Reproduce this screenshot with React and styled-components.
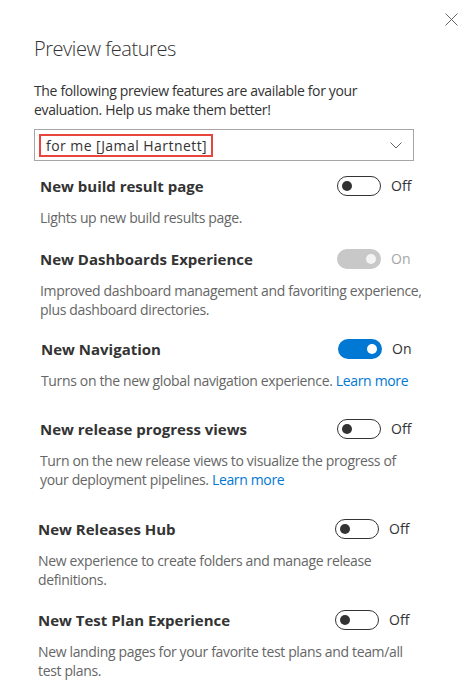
import React from "react";
import styled, { createGlobalStyle } from "styled-components";

const Global = createGlobalStyle`
  html, body { margin: 0; padding: 0; background: #ffffff; }
  body { font-family: "Open Sans", "Noto Sans", sans-serif; color: #333333; }
  * { box-sizing: border-box; }
`;

const Panel = styled.div`
  width: 469px;
  height: 698px;
  background: #ffffff;
  display: flex;
  flex-direction: column;
`;

const TopBar = styled.div`
  display: flex;
  justify-content: flex-end;
  padding: 13px 11px 0 0;
  height: 27px;
`;

const CloseButton = styled.button`
  width: 13px;
  height: 13px;
  padding: 0;
  border: none;
  background: transparent;
  display: flex;
  cursor: pointer;
`;

const Body = styled.div`
  padding: 8px 0 0 34px;
  display: flex;
  flex-direction: column;
`;

const Title = styled.h1`
  margin: 0;
  font-size: 20px;
  line-height: 28px;
  font-weight: 300;
  letter-spacing: -0.45px;
  color: #333333;
`;

const Intro = styled.p`
  margin: 18px 0 0;
  font-size: 14px;
  line-height: 19px;
  letter-spacing: -0.35px;
  color: #333333;
  width: 360px;
`;

const Dropdown = styled.div`
  margin-top: 10px;
  width: 380px;
  height: 32px;
  border: 1px solid #a6a6a6;
  display: flex;
  align-items: center;
  justify-content: space-between;
  padding: 0 11px 0 4px;
`;

const Highlight = styled.span`
  display: inline-flex;
  align-items: center;
  width: 174px;
  height: 23px;
  border: 2px solid #e8453c;
  padding-left: 5px;
  font-size: 14px;
  letter-spacing: 0.45px;
  color: #333333;
  white-space: nowrap;
`;

const FeatureList = styled.div`
  display: flex;
  flex-direction: column;
  margin-left: -34px;
`;

const Feature = styled.section`
  margin-top: ${(p) => p.$gap}px;
  padding-left: ${(p) => p.$left}px;
  display: flex;
  flex-direction: column;
`;

const FeatureHeader = styled.div`
  display: grid;
  grid-template-columns: 297px 44px auto;
  align-items: center;
  height: 20px;
`;

const FeatureName = styled.h2`
  margin: 0;
  font-size: 15px;
  line-height: 20px;
  font-weight: 700;
  color: #333333;
  white-space: nowrap;
`;

const Track = styled.span`
  width: 44px;
  height: 20px;
  border-radius: 10px;
  border: 1px solid ${(p) => (p.$state === "off" ? "#333333" : "transparent")};
  background: ${(p) =>
    p.$state === "on" ? "#0078d4" : p.$state === "disabled" ? "#c8c8c8" : "#ffffff"};
  display: flex;
  align-items: center;
  justify-content: ${(p) => (p.$state === "off" ? "flex-start" : "flex-end")};
  padding: 0 4px;
`;

const Knob = styled.span`
  width: 10px;
  height: 10px;
  border-radius: 50%;
  background: ${(p) =>
    p.$state === "off" ? "#333333" : p.$state === "disabled" ? "#f4f4f4" : "#ffffff"};
`;

const StateLabel = styled.span`
  margin-left: 10px;
  font-size: 14px;
  line-height: 20px;
  color: ${(p) => (p.$state === "disabled" ? "#a6a6a6" : "#333333")};
`;

const Description = styled.p`
  margin: 12px 0 0;
  font-size: 14px;
  line-height: 19px;
  letter-spacing: -0.35px;
  color: #666666;
  width: 385px;
`;

const Link = styled.a`
  color: #0078d4;
  text-decoration: none;
`;

const features = [
  {
    name: "New build result page",
    state: "off",
    desc: "Lights up new build results page.",
    gap: 15,
    left: 40,
  },
  {
    name: "New Dashboards Experience",
    state: "disabled",
    desc: "Improved dashboard management and favoriting experience, plus dashboard directories.",
    gap: 22,
    left: 40,
  },
  {
    name: "New Navigation",
    state: "on",
    desc: "Turns on the new global navigation experience.",
    link: true,
    gap: 20,
    left: 41,
  },
  {
    name: "New release progress views",
    state: "off",
    desc: "Turn on the new release views to visualize the progress of your deployment pipelines.",
    link: true,
    gap: 29,
    left: 40,
  },
  {
    name: "New Releases Hub",
    state: "off",
    desc: "New experience to create folders and manage release definitions.",
    gap: 30,
    left: 38,
  },
  {
    name: "New Test Plan Experience",
    state: "off",
    desc: "New landing pages for your favorite test plans and team/all test plans.",
    gap: 21,
    left: 38,
  },
];

function Toggle({ state }) {
  return (
    <>
      <Track $state={state}>
        <Knob $state={state} />
      </Track>
      <StateLabel $state={state}>{state === "off" ? "Off" : "On"}</StateLabel>
    </>
  );
}

export default function App() {
  return (
    <>
      <Global />
      <Panel>
        <TopBar>
          <CloseButton aria-label="Close">
            <svg width="13" height="13" viewBox="0 0 13 13">
              <path d="M0.5 0.5 L12.5 12.5 M12.5 0.5 L0.5 12.5" stroke="#666666" strokeWidth="1" fill="none" />
            </svg>
          </CloseButton>
        </TopBar>
        <Body>
          <Title>Preview features</Title>
          <Intro>The following preview features are available for your evaluation. Help us make them better!</Intro>
          <Dropdown>
            <Highlight>for me [Jamal Hartnett]</Highlight>
            <svg width="12" height="7" viewBox="0 0 12 7">
              <path d="M0.5 0.5 L6 6 L11.5 0.5" stroke="#666666" strokeWidth="1" fill="none" />
            </svg>
          </Dropdown>
          <FeatureList>
            {features.map((f) => (
              <Feature key={f.name} $gap={f.gap} $left={f.left}>
                <FeatureHeader>
                  <FeatureName>{f.name}</FeatureName>
                  <Toggle state={f.state} />
                </FeatureHeader>
                <Description>
                  {f.desc}
                  {f.link && (
                    <>
                      {" "}
                      <Link href="#">Learn more</Link>
                    </>
                  )}
                </Description>
              </Feature>
            ))}
          </FeatureList>
        </Body>
      </Panel>
    </>
  );
}
